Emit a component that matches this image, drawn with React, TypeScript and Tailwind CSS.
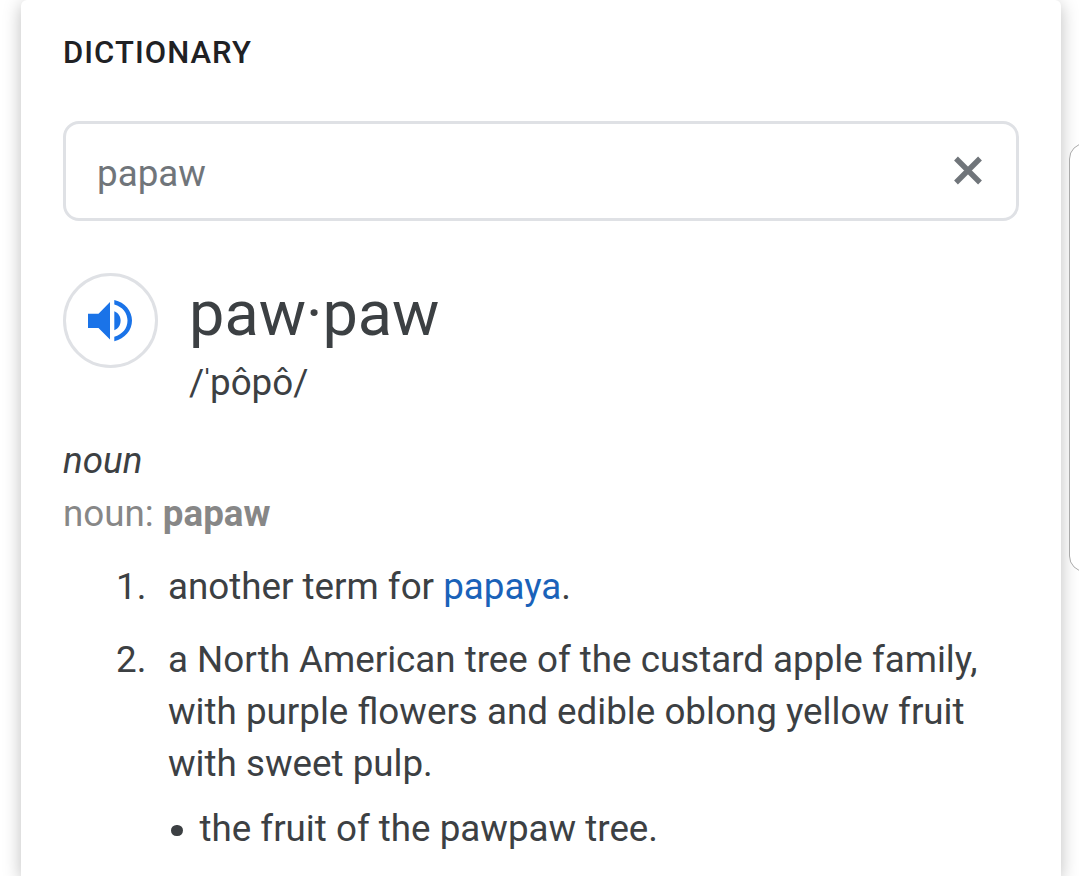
import React from 'react';

interface Sense {
  id: number;
  content: React.ReactNode;
  sub?: string;
}

const senses: Sense[] = [
  {
    id: 1,
    content: (
      <>
        another term for <a href="#" className="text-[#1a62b9]">papaya</a>.
      </>
    ),
  },
  {
    id: 2,
    content: 'a North American tree of the custard apple family, with purple flowers and edible oblong yellow fruit with sweet pulp.',
    sub: 'the fruit of the pawpaw tree.',
  },
];

const SpeakerIcon: React.FC = () => (
  <svg viewBox="0 0 45 42" className="h-[42px] w-[45px]" fill="#1a73e8">
    <path d="M0 13.700h10.500L22 2v37.500L10.500 28H0z" />
    <path d="M26.300 11.200c4 1.600 6.300 5.200 6.300 9.500s-2.300 7.900-6.300 9.500z" />
    <path d="M26.300 0C37 2.300 44 11 44 20.600s-7 18.300-17.700 20.600v-4.400C34.500 34.500 39.500 28.300 39.500 20.600S34.500 6.700 26.300 4.400z" />
  </svg>
);

const App: React.FC = () => {
  return (
    <div className="flex h-[876px] overflow-hidden bg-white pl-[21px] font-[Roboto,sans-serif] text-[#3c4043]">
      <main className="w-[1040px] shrink-0 rounded-t-[6px] bg-white px-[42px] pt-[31px] shadow-[0_4px_18px_rgba(0,0,0,0.26)]">
        <h1 className="h-[44px] text-[31px] font-medium leading-[44px] tracking-[1.050px] text-[#202124]">DICTIONARY</h1>

        <div className="mt-[46px] flex h-[100px] w-[956px] items-center justify-between rounded-[16px] border-[3px] border-[#dfe1e5] pl-[31px] pr-[33px]">
          <span className="pt-[6px] text-[36.750px] text-[#70757a]">papaw</span>
          <svg viewBox="0 0 30 30" className="h-[30px] w-[30px]" stroke="#70757a" strokeWidth="5.400">
            <path d="M3 2.500l24 24M27 2.500l-24 24" />
          </svg>
        </div>

        <section className="mt-[52px] flex h-[140px]">
          <button className="flex size-[95px] items-center justify-center rounded-full border-[3px] border-[#dfe1e5]" aria-label="Listen">
            <SpeakerIcon />
          </button>
          <div className="ml-[31px]">
            <h2 className="h-[80px] pt-px text-[63px] leading-[80px]">paw·paw</h2>
            <p className="text-[36.750px] leading-[60px]">
              <span className="tracking-[-3.200px]">/ˈ</span>pôpô/
            </p>
          </div>
        </section>

        <p className="mt-[22px] text-[36.750px] italic leading-[52px]">noun</p>
        <p className="text-[36.750px] leading-[53px] text-[#878787]">
          noun: <b>papaw</b>
        </p>

        <ol className="mt-[21px] flex flex-col gap-[21px] text-[36.750px] leading-[52px]">
          {senses.map((sense) => (
            <li key={sense.id} className="flex pl-[53px]">
              <span className="w-[52px] shrink-0">{sense.id}.</span>
              <div className="w-[840px] shrink-0">
                {sense.content}
                {sense.sub && (
                  <div className="mt-[13px] flex items-center">
                    <span className="ml-[3px] mr-[17px] mt-[3px] size-[11.500px] rounded-full bg-[#3c4043]" />
                    {sense.sub}
                  </div>
                )}
              </div>
            </li>
          ))}
        </ol>
      </main>

      <aside className="ml-[8px] mt-[143px] h-[429px] w-[40px] shrink-0 rounded-[16px] border border-[#aaa] bg-white" />
    </div>
  );
};

export default App;
